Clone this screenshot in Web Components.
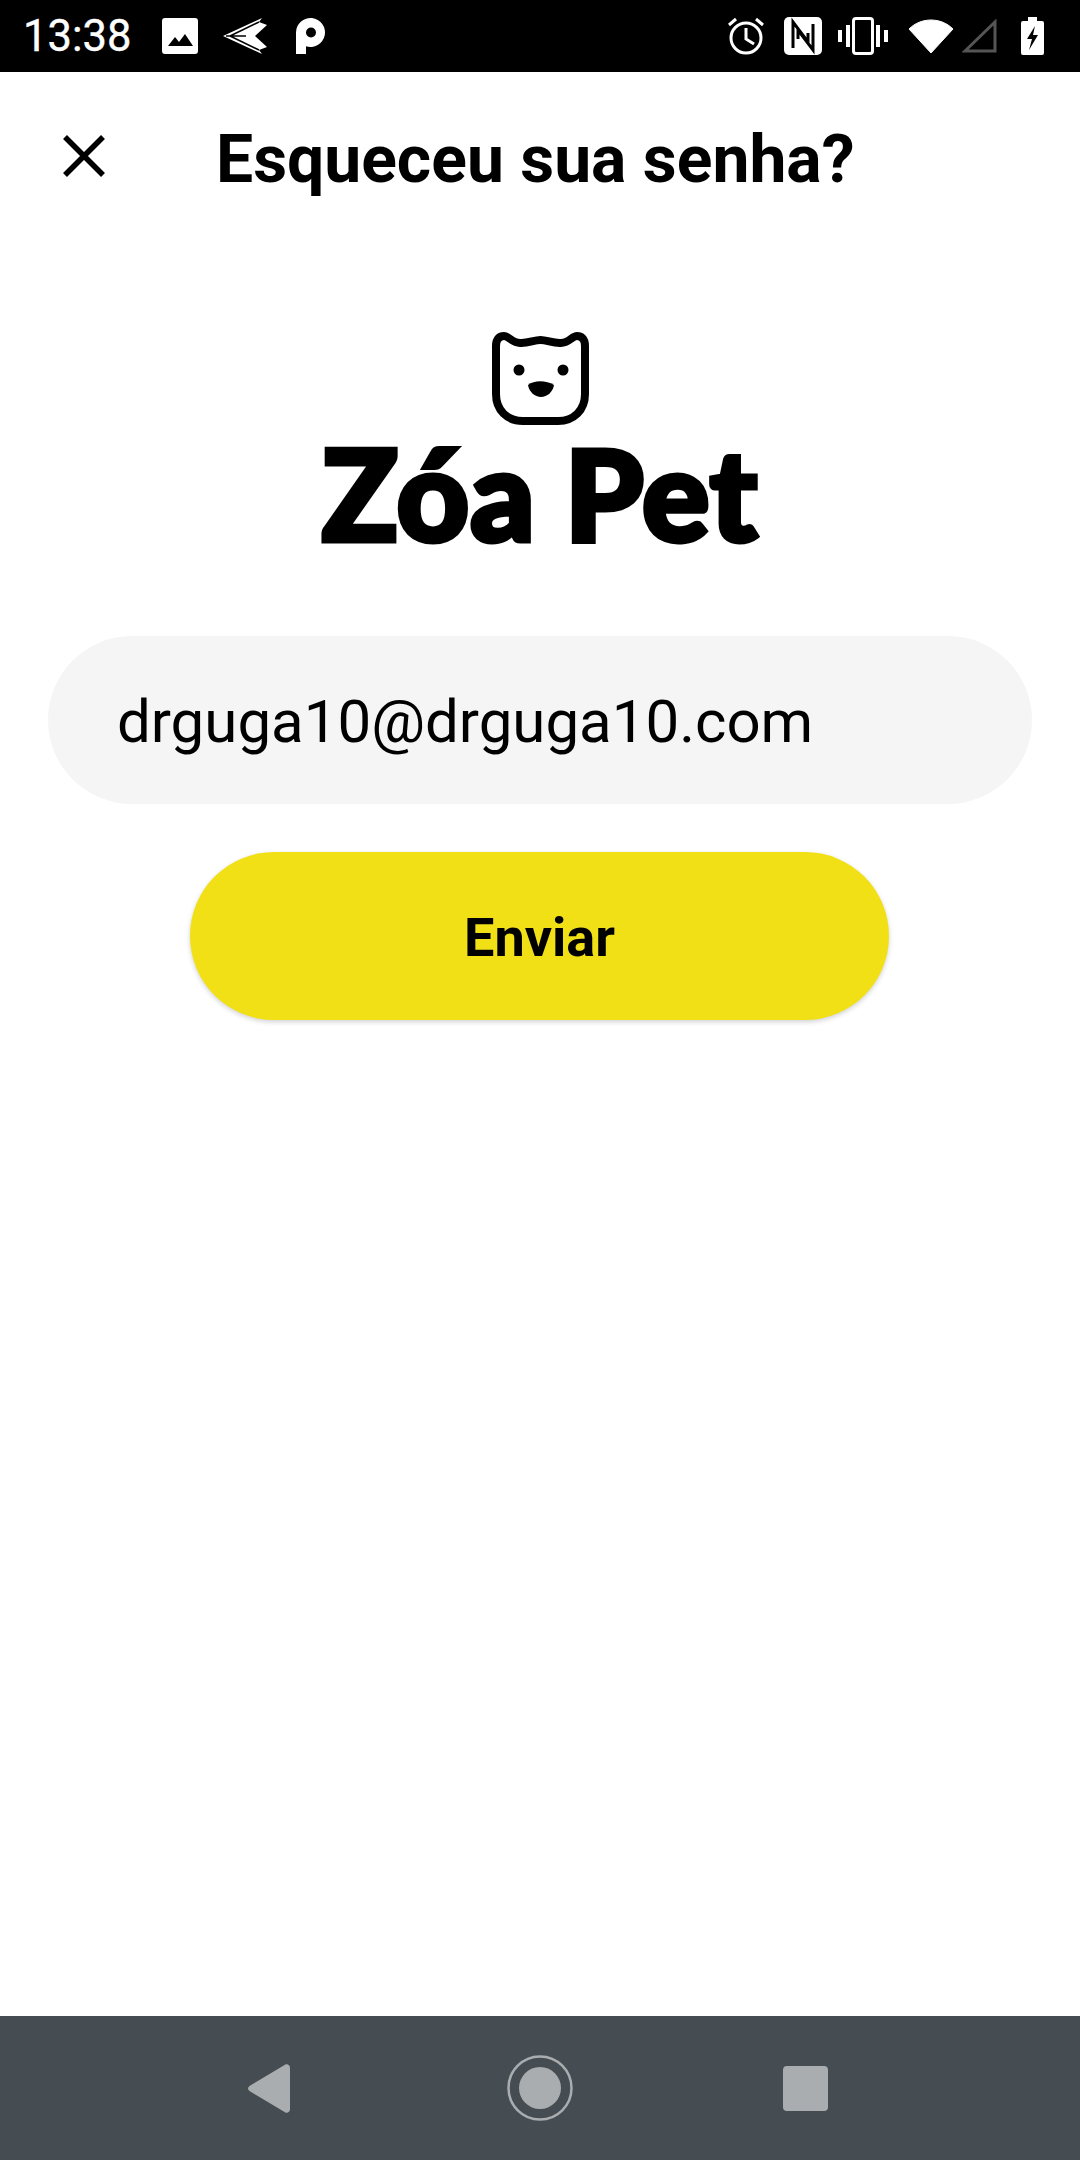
<!DOCTYPE html>
<html lang="pt">
<head>
<meta charset="utf-8">
<title>Esqueceu sua senha?</title>
<style>
  html, body { margin: 0; padding: 0; background: #fff; }
  body { font-family: Roboto, "Liberation Sans", sans-serif; }
  #app { display: flex; flex-direction: column; width: 1080px; height: 2160px; overflow: hidden; }
</style>
</head>
<body>
<div id="app">
  <status-bar time="13:38"></status-bar>
  <top-bar>Esqueceu sua senha?</top-bar>
  <zoa-logo></zoa-logo>
  <pill-field>drguga10@drguga10.com</pill-field>
  <pill-button>Enviar</pill-button>
  <nav-bar></nav-bar>
</div>

<script>
// Android status bar with notification and system icons
class StatusBar extends HTMLElement {
  connectedCallback() {
    this.attachShadow({ mode: "open" }).innerHTML = `
      <style>
        :host { display: flex; align-items: center; flex: none; height: 72px; background: #000; color: #fff; padding: 0 36px 0 23px; box-sizing: border-box; }
        .time { font: 400 43.500px Roboto, sans-serif; width: 139px; flex: none; -webkit-text-stroke: .4px #fff; }
        .left { display: flex; align-items: center; flex: 1; }
        .right { display: flex; align-items: center; }
        svg { display: block; fill: #fff; flex: none; }
      </style>
      <span class="time">${this.getAttribute("time")}</span>
      <div class="left">
        <svg width="36" height="36" viewBox="0 0 36 36"><path fill-rule="evenodd" d="M3 0h30a3 3 0 0 1 3 3v30a3 3 0 0 1-3 3H3a3 3 0 0 1-3-3V3a3 3 0 0 1 3-3zM6 28h25l-8-12-6 8-4-5z"/></svg>
        <svg width="46" height="38" viewBox="0 0 46 38" style="margin-left:24px"><path d="M1 19 40 1l-3 4 8 3-12 11 12 11-8 3 3 4z"/><path d="M8 19 37 5M8 19l29 14M4 19h20" fill="none" stroke="#000" stroke-width="1.500"/></svg>
        <svg width="30" height="36" viewBox="0 0 30 36" style="margin-left:28px"><path fill-rule="evenodd" d="M0 36V14.500a14.500 14.500 0 1 1 10 13.800V36zM10 14.500a5 5 0 1 0 10 0a5 5 0 1 0-10 0z"/></svg>
      </div>
      <div class="right">
        <svg width="38" height="38" viewBox="0 0 38 38"><circle cx="19" cy="21" r="15" fill="none" stroke="#fff" stroke-width="3"/><path d="M19 11v11l8 5M2 8l7-6M36 8l-7-6" fill="none" stroke="#fff" stroke-width="3"/></svg>
        <svg width="38" height="38" viewBox="0 0 38 38" style="margin-left:19px"><path d="M5 0h28a5 5 0 0 1 5 5v28a5 5 0 0 1-5 5H5a5 5 0 0 1-5-5V5a5 5 0 0 1 5-5z"/><path d="M9 31V5l15 20v-9M29 7v26L14 13v9" fill="none" stroke="#000" stroke-width="3"/></svg>
        <svg width="50" height="38" viewBox="0 0 50 38" style="margin-left:16px"><path d="M0 13h4v12H0zM8 8h4v22H8zM38 8h4v22h-4zM46 13h4v12h-4z"/><rect x="15.500" y="1.500" width="19" height="35" rx="2.500" fill="none" stroke="#fff" stroke-width="3"/></svg>
        <svg width="46" height="35" viewBox="0 0 46 35" style="margin-left:20px"><path d="M23 34 1 10c12-12 32-12 44 0z" stroke="#fff" stroke-width="1" stroke-linejoin="round"/></svg>
        <svg width="35" height="34" viewBox="0 0 35 34" style="margin-left:8px"><path d="M3 32 33 3v29z" fill="none" stroke="#555" stroke-width="3"/></svg>
        <svg width="23" height="38" viewBox="0 0 23 38" style="margin-left:24px"><path fill-rule="evenodd" d="M7 0h9v4h5a2 2 0 0 1 2 2v30a2 2 0 0 1-2 2H2a2 2 0 0 1-2-2V6a2 2 0 0 1 2-2h5zM14 9 6 22h5l-3 11 9-15h-5z"/></svg>
      </div>`;
  }
}

// Title row with the close button
class TopBar extends HTMLElement {
  connectedCallback() {
    this.attachShadow({ mode: "open" }).innerHTML = `
      <style>
        :host { display: flex; align-items: center; flex: none; height: 176px; padding: 0 0 8px 62px; box-sizing: border-box; }
        svg { display: block; flex: none; }
        .title { font: 700 66px Roboto, sans-serif; color: #000; margin: 6px 0 0 110px; white-space: nowrap; }
      </style>
      <svg width="44" height="44" viewBox="0 0 44 44"><path d="M3 3l38 38M41 3 3 41" stroke="#000" stroke-width="5.500"/></svg>
      <span class="title"><slot></slot></span>`;
  }
}

// Dog face mark and the brand name below it
class ZoaLogo extends HTMLElement {
  connectedCallback() {
    this.attachShadow({ mode: "open" }).innerHTML = `
      <style>
        :host { display: flex; flex-direction: column; align-items: center; flex: none; height: 388px; padding-top: 84px; box-sizing: border-box; }
        svg { display: block; flex: none; }
        .name { font: 900 126px/110px Lato, "Liberation Sans", sans-serif; color: #000; margin-top: 13px; white-space: nowrap; -webkit-text-stroke: 5px #000; word-spacing: -2px; letter-spacing: 1px; }
      </style>
      <svg width="97" height="93" viewBox="0 0 97 93">
        <path d="M4 14C4 6 8 4 12 4c5 0 8 7 16 7 8 .5 14-3 20.500-3S61 11.500 69 11c8 0 11-7 16-7 4 0 8 2 8 10v48c0 16-11 27-27 27H31C15 89 4 78 4 62z" fill="none" stroke="#000" stroke-width="8"/>
        <circle cx="27" cy="38" r="5.500"/><circle cx="71" cy="38" r="5.500"/>
        <path d="M36 53c6-5 18-5 26 0-1 7-7 12-13 12s-12-5-13-12z"/>
      </svg>
      <div class="name">Zóa Pet</div>`;
  }
}

// Rounded read-only field
class PillField extends HTMLElement {
  connectedCallback() {
    this.attachShadow({ mode: "open" }).innerHTML = `
      <style>
        :host { display: flex; align-items: center; flex: none; height: 168px; margin: 0 48px; padding: 2px 0 0 69px; box-sizing: border-box; background: #f5f5f5; border-radius: 84px; font: 400 60px Roboto, sans-serif; color: #000; }
      </style>
      <slot></slot>`;
  }
}

// Yellow call to action
class PillButton extends HTMLElement {
  connectedCallback() {
    this.attachShadow({ mode: "open" }).innerHTML = `
      <style>
        :host { display: flex; align-items: center; justify-content: center; flex: none; width: 699px; height: 168px; margin: 48px 0 0 190px; background: #f2e017; border-radius: 84px; box-shadow: 0 2px 5px rgba(0,0,0,.18); font: 700 54px Roboto, sans-serif; color: #000; padding-top: 2px; box-sizing: border-box; }
      </style>
      <slot></slot>`;
  }
}

// Android navigation bar
class NavBar extends HTMLElement {
  connectedCallback() {
    this.attachShadow({ mode: "open" }).innerHTML = `
      <style>
        :host { display: flex; align-items: center; flex: none; height: 144px; margin-top: auto; padding-left: 248px; box-sizing: border-box; background: #464d52; }
        svg { display: block; flex: none; fill: #a9adb0; }
      </style>
      <svg width="42" height="49" viewBox="0 0 42 49"><path d="M37 .8c2-1.300 5 0 5 3v41.400c0 3-3 4.300-5 3L1.500 27c-2-1.500-2-3.500 0-5z"/></svg>
      <svg width="66" height="66" viewBox="0 0 66 66" style="margin-left:217px"><circle cx="33" cy="33" r="31.500" fill="none" stroke="#a9adb0" stroke-width="2.500"/><circle cx="33" cy="33" r="21"/></svg>
      <svg width="45" height="45" viewBox="0 0 45 45" style="margin-left:210px"><rect width="45" height="45" rx="4"/></svg>`;
  }
}

customElements.define("status-bar", StatusBar);
customElements.define("top-bar", TopBar);
customElements.define("zoa-logo", ZoaLogo);
customElements.define("pill-field", PillField);
customElements.define("pill-button", PillButton);
customElements.define("nav-bar", NavBar);
</script>
</body>
</html>
